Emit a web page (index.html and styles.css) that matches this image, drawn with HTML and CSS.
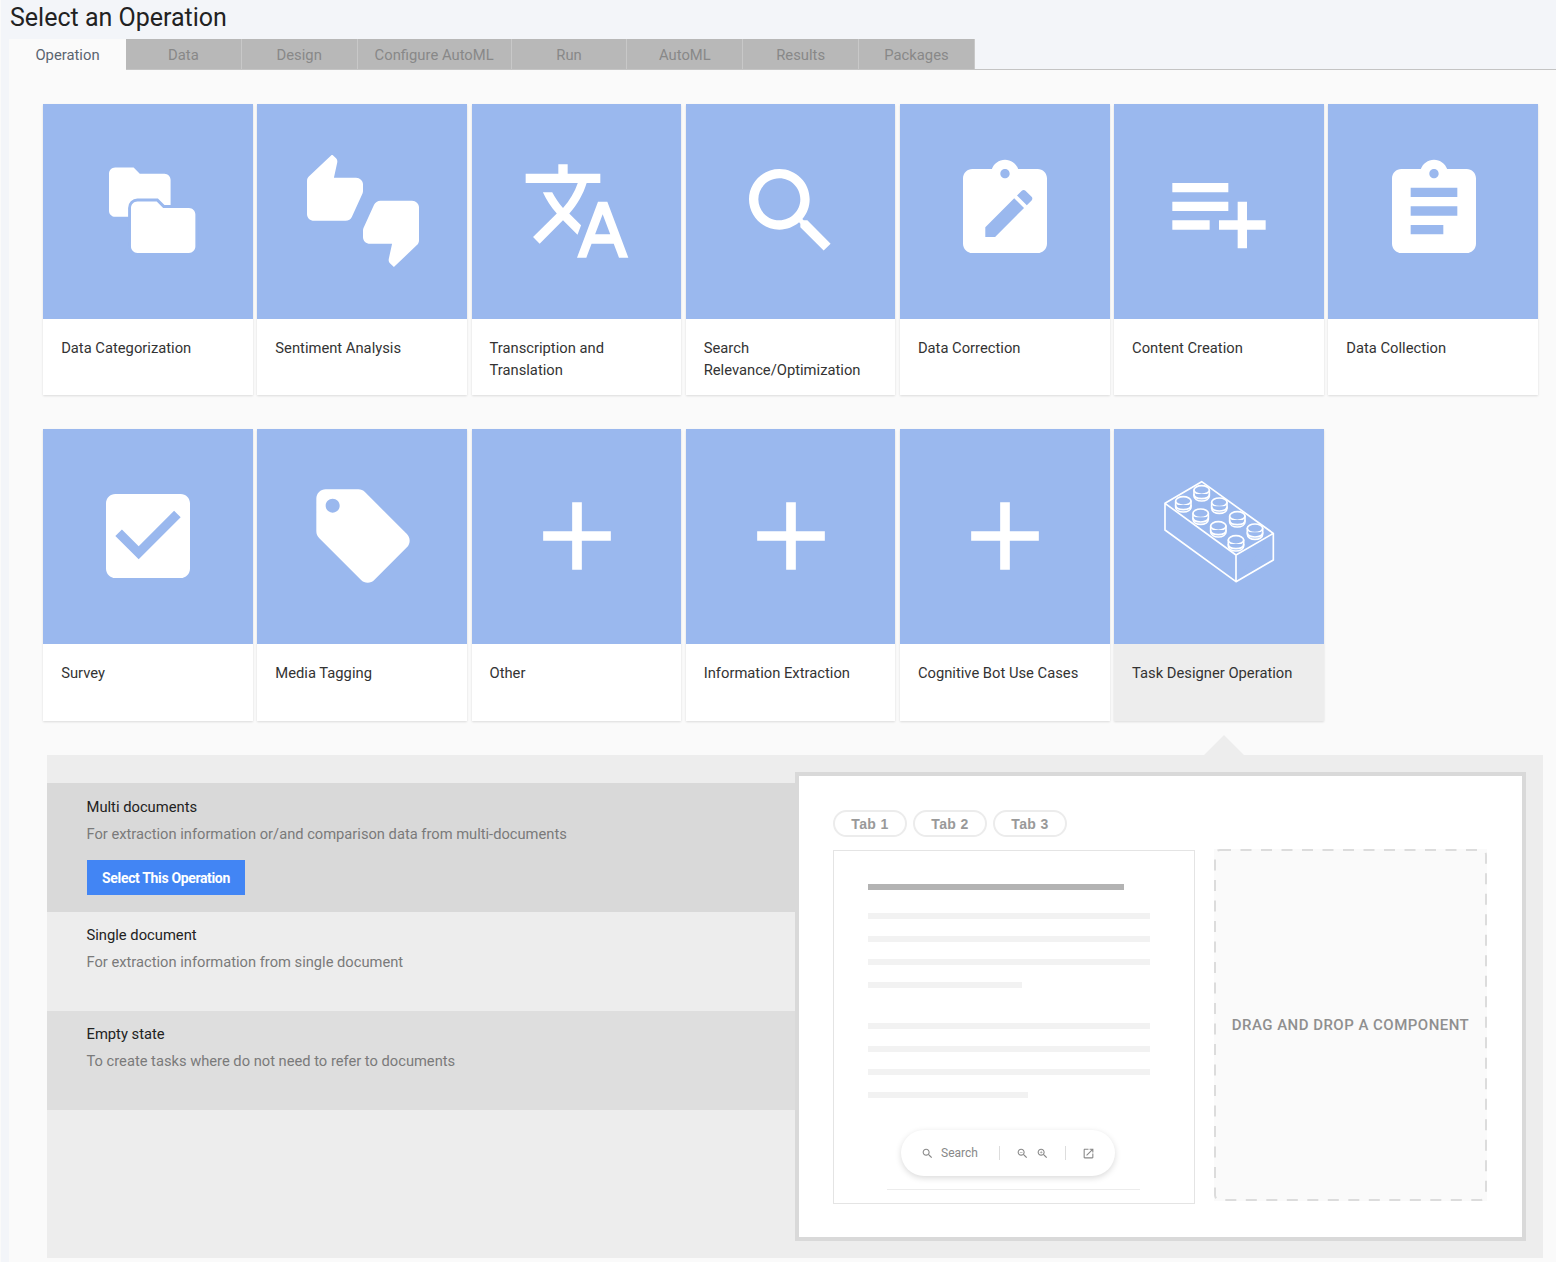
FILE: index.html
```html
<!DOCTYPE html>
<html lang="en">
<head>
    <meta charset="UTF-8">
    <title>Select an Operation</title>
    <link rel="stylesheet" href="styles.css">
</head>
<body>
    <h1 class="page-title">Select an Operation</h1>
    <div class="tabs">
        <div class="tab active">Operation</div>
        <div class="tab">Data</div>
        <div class="tab">Design</div>
        <div class="tab wide">Configure AutoML</div>
        <div class="tab">Run</div>
        <div class="tab">AutoML</div>
        <div class="tab">Results</div>
        <div class="tab">Packages</div>
    </div>
    <div class="content">
        <div class="cards">
            <div class="card">
                <div class="card-img">
                    <svg class="icon" viewBox="0 0 24 24">
                        <g transform="translate(2.32 .04) scale(.66)"><path d="M10 4H4c-1.1 0-1.99.9-1.99 2L2 18c0 1.1.9 2 2 2h16c1.1 0 2-.9 2-2V8c0-1.1-.9-2-2-2h-8l-2-2z"/></g>
                        <g transform="translate(6.97 7.2) scale(.69)"><path class="cut" d="M10 4H4c-1.1 0-1.99.9-1.99 2L2 18c0 1.1.9 2 2 2h16c1.1 0 2-.9 2-2V8c0-1.1-.9-2-2-2h-8l-2-2z"/></g>
                    </svg>
                </div>
                <div class="card-label">Data Categorization</div>
            </div>
            <div class="card">
                <div class="card-img">
                    <svg class="icon" viewBox="0 0 24 24">
                        <g transform="translate(-5.25 -.81) scale(.75 .71)"><path d="M23 10c0-1.1-.9-2-2-2h-6.31l.95-4.57.03-.32c0-.41-.17-.79-.44-1.06L14.17 1 7.59 7.59C7.22 7.95 7 8.45 7 9v10c0 1.1.9 2 2 2h9c.83 0 1.54-.5 1.84-1.22l3.02-7.05c.09-.23.14-.47.14-.73v-2z"/></g>
                        <g transform="translate(29.25 24.7) scale(-.75 -.71)"><path d="M23 10c0-1.1-.9-2-2-2h-6.31l.95-4.57.03-.32c0-.41-.17-.79-.44-1.06L14.17 1 7.59 7.59C7.22 7.95 7 8.45 7 9v10c0 1.1.9 2 2 2h9c.83 0 1.54-.5 1.84-1.22l3.02-7.05c.09-.23.14-.47.14-.73v-2z"/></g>
                    </svg>
                </div>
                <div class="card-label">Sentiment Analysis</div>
            </div>
            <div class="card">
                <div class="card-img">
                    <svg class="icon" viewBox="0 0 24 24"><path d="M12.87 15.07l-2.54-2.51.03-.03c1.74-1.94 2.98-4.17 3.71-6.53H17V4h-7V2H8v2H1v1.99h11.17C11.5 7.92 10.44 9.75 9 11.35 8.07 10.32 7.3 9.19 6.69 8h-2c.73 1.63 1.73 3.17 2.98 4.56l-5.09 5.02L4 19l5-5 3.11 3.11.76-2.04zM18.5 10h-2L12 22h2l1.12-3h4.75L21 22h2l-4.5-12zm-2.62 7l1.62-4.33L19.12 17h-3.24z"/></svg>
                </div>
                <div class="card-label">Transcription and Translation</div>
            </div>
            <div class="card">
                <div class="card-img">
                    <svg class="icon" viewBox="0 0 24 24"><path d="M15.5 14h-.79l-.28-.27C15.41 12.59 16 11.11 16 9.5 16 5.91 13.09 3 9.5 3S3 5.91 3 9.5 5.91 16 9.5 16c1.61 0 3.09-.59 4.23-1.57l.27.28v.79l5 4.99L20.49 19l-4.99-5zm-6 0C7.01 14 5 11.99 5 9.5S7.01 5 9.5 5 14 7.01 14 9.5 11.99 14 9.5 14z"/></svg>
                </div>
                <div class="card-label">Search Relevance/Optimization</div>
            </div>
            <div class="card">
                <div class="card-img">
                    <svg class="icon" viewBox="0 0 24 24">
                        <path fill-rule="evenodd" d="M19 3h-4.18C14.4 1.84 13.3 1 12 1c-1.3 0-2.4.84-2.82 2H5c-1.1 0-2 .9-2 2v14c0 1.1.9 2 2 2h14c1.1 0 2-.9 2-2V5c0-1.1-.9-2-2-2zm-7 0c.55 0 1 .45 1 1s-.45 1-1 1-1-.45-1-1 .45-1 1-1z"/>
                        <g transform="translate(6.1 5.8) scale(.56)"><path class="cut-fill" d="M3 17.25V21h3.75L17.81 9.94l-3.75-3.75L3 17.25zM20.71 7.04c.39-.39.39-1.02 0-1.41l-2.34-2.34c-.39-.39-1.02-.39-1.41 0l-1.83 1.83 3.75 3.75 1.83-1.83z"/></g>
                    </svg>
                </div>
                <div class="card-label">Data Correction</div>
            </div>
            <div class="card">
                <div class="card-img">
                    <svg class="icon" viewBox="0 0 24 24"><path d="M14 10H2v2h12v-2zm0-4H2v2h12V6zm4 8v-4h-2v4h-4v2h4v4h2v-4h4v-2h-4zM2 16h8v-2H2v2z"/></svg>
                </div>
                <div class="card-label">Content Creation</div>
            </div>
            <div class="card">
                <div class="card-img">
                    <svg class="icon" viewBox="0 0 24 24"><path d="M19 3h-4.18C14.4 1.84 13.3 1 12 1c-1.3 0-2.4.84-2.82 2H5c-1.1 0-2 .9-2 2v14c0 1.1.9 2 2 2h14c1.1 0 2-.9 2-2V5c0-1.1-.9-2-2-2zm-7 0c.55 0 1 .45 1 1s-.45 1-1 1-1-.45-1-1 .45-1 1-1zm2 14H7v-2h7v2zm3-4H7v-2h10v2zm0-4H7V7h10v2z"/></svg>
                </div>
                <div class="card-label">Data Collection</div>
            </div>
            <div class="card">
                <div class="card-img">
                    <svg class="icon" viewBox="0 0 24 24"><path d="M19 3H5c-1.11 0-2 .9-2 2v14c0 1.1.89 2 2 2h14c1.11 0 2-.9 2-2V5c0-1.1-.89-2-2-2zm-9 14l-5-5 1.41-1.41L10 14.17l7.59-7.59L19 8l-9 9z"/></svg>
                </div>
                <div class="card-label">Survey</div>
            </div>
            <div class="card">
                <div class="card-img">
                    <svg class="icon" viewBox="0 0 24 24"><path d="M21.41 11.58l-9-9C12.05 2.22 11.55 2 11 2H4c-1.1 0-2 .9-2 2v7c0 .55.22 1.05.59 1.42l9 9c.36.36.86.58 1.41.58.55 0 1.05-.22 1.41-.59l7-7c.37-.36.59-.86.59-1.41 0-.55-.23-1.06-.59-1.42zM5.5 7C4.67 7 4 6.33 4 5.5S4.67 4 5.5 4 7 4.67 7 5.5 6.33 7 5.5 7z"/></svg>
                </div>
                <div class="card-label">Media Tagging</div>
            </div>
            <div class="card">
                <div class="card-img">
                    <svg class="icon icon-add" viewBox="0 0 24 24"><path d="M19 13h-6v6h-2v-6H5v-2h6V5h2v6h6v2z"/></svg>
                </div>
                <div class="card-label">Other</div>
            </div>
            <div class="card">
                <div class="card-img">
                    <svg class="icon icon-add" viewBox="0 0 24 24"><path d="M19 13h-6v6h-2v-6H5v-2h6V5h2v6h6v2z"/></svg>
                </div>
                <div class="card-label">Information Extraction</div>
            </div>
            <div class="card">
                <div class="card-img">
                    <svg class="icon icon-add" viewBox="0 0 24 24"><path d="M19 13h-6v6h-2v-6H5v-2h6V5h2v6h6v2z"/></svg>
                </div>
                <div class="card-label">Cognitive Bot Use Cases</div>
            </div>
            <div class="card selected">
                <div class="card-img">
                    <svg class="icon-brick" viewBox="0 0 540 390">
                        <defs>
                            <g id="stud">
                                <path d="M-23 -10V8c0 9 10 15 23 15s23-6 23-15V-10z"/>
                                <ellipse cx="0" cy="-10" rx="23" ry="13"/>
                                <path d="M-23 2c0 9 10 14 23 14s23-5 23-14"/>
                            </g>
                        </defs>
                        <path d="M105 115L215 50 430 205 318 270zM105 115V195L318 350V270M318 350L430 285V205"/>
                        <use href="#stud" x="215" y="85"/>
                        <use href="#stud" x="160" y="118"/>
                        <use href="#stud" x="268" y="122"/>
                        <use href="#stud" x="212" y="155"/>
                        <use href="#stud" x="322" y="163"/>
                        <use href="#stud" x="265" y="193"/>
                        <use href="#stud" x="375" y="200"/>
                        <use href="#stud" x="318" y="235"/>
                    </svg>
                </div>
                <div class="card-label">Task Designer Operation</div>
            </div>
        </div>

        <div class="detail">
            <div class="detail-arrow"></div>
            <div class="options">
                <div class="option current">
                    <div class="option-title">Multi documents</div>
                    <div class="option-desc">For extraction information or/and comparison data from multi-documents</div>
                    <button class="select-btn">Select This Operation</button>
                </div>
                <div class="option">
                    <div class="option-title">Single document</div>
                    <div class="option-desc">For extraction information from single document</div>
                </div>
                <div class="option shaded">
                    <div class="option-title">Empty state</div>
                    <div class="option-desc">To create tasks where do not need to refer to documents</div>
                </div>
            </div>
            <div class="preview">
                <div class="preview-tabs">
                    <span class="pill">Tab 1</span>
                    <span class="pill">Tab 2</span>
                    <span class="pill">Tab 3</span>
                </div>
                <div class="preview-body">
                    <div class="doc">
                        <div class="doc-heading"></div>
                        <div class="doc-lines">
                            <div class="doc-line"></div>
                            <div class="doc-line"></div>
                            <div class="doc-line"></div>
                            <div class="doc-line short"></div>
                        </div>
                        <div class="doc-lines">
                            <div class="doc-line"></div>
                            <div class="doc-line"></div>
                            <div class="doc-line"></div>
                            <div class="doc-line shorter"></div>
                        </div>
                        <div class="toolbar">
                            <svg class="tool" viewBox="0 0 24 24"><path d="M15.5 14h-.79l-.28-.27C15.41 12.59 16 11.11 16 9.5 16 5.91 13.09 3 9.5 3S3 5.91 3 9.5 5.91 16 9.5 16c1.61 0 3.09-.59 4.23-1.57l.27.28v.79l5 4.99L20.49 19l-4.99-5zm-6 0C7.01 14 5 11.99 5 9.5S7.01 5 9.5 5 14 7.01 14 9.5 11.99 14 9.5 14z"/></svg>
                            <span class="toolbar-text">Search</span>
                            <span class="toolbar-sep"></span>
                            <svg class="tool" viewBox="0 0 24 24"><path d="M15.5 14h-.79l-.28-.27C15.41 12.59 16 11.11 16 9.5 16 5.91 13.09 3 9.5 3S3 5.91 3 9.5 5.91 16 9.5 16c1.61 0 3.09-.59 4.23-1.57l.27.28v.79l5 4.99L20.49 19l-4.99-5zm-6 0C7.01 14 5 11.99 5 9.5S7.01 5 9.5 5 14 7.01 14 9.5 11.99 14 9.5 14zM7 9h5v1H7z"/></svg>
                            <svg class="tool tool-gap" viewBox="0 0 24 24"><path d="M15.5 14h-.79l-.28-.27C15.41 12.59 16 11.11 16 9.5 16 5.91 13.09 3 9.5 3S3 5.91 3 9.5 5.91 16 9.5 16c1.61 0 3.09-.59 4.23-1.57l.27.28v.79l5 4.99L20.49 19l-4.99-5zm-6 0C7.01 14 5 11.99 5 9.5S7.01 5 9.5 5 14 7.01 14 9.5 11.99 14 9.5 14zM12 10h-2v2H9v-2H7V9h2V7h1v2h2v1z"/></svg>
                            <span class="toolbar-sep"></span>
                            <svg class="tool" viewBox="0 0 24 24"><path d="M19 19H5V5h7V3H5c-1.11 0-2 .9-2 2v14c0 1.1.89 2 2 2h14c1.1 0 2-.9 2-2v-7h-2v7zM14 3v2h3.59l-9.83 9.83 1.41 1.41L19 6.41V10h2V3h-7z"/></svg>
                        </div>
                        <div class="doc-rule"></div>
                    </div>
                    <div class="dropzone">
                        <svg class="dropzone-edge" viewBox="0 0 273 352"><rect x="1" y="1" width="271" height="350" rx="5"/></svg>
                        DRAG AND DROP A COMPONENT
                    </div>
                </div>
            </div>
        </div>
    </div>
</body>
</html>
```

FILE: styles.css
```css
* {
    box-sizing: border-box;
}
html, body {
    height: 100%;
}
body {
    margin: 0;
    padding-left: 1px;
    background-color: #f3f5f9;
    font-family: 'Roboto', 'Liberation Sans', sans-serif;
    color: #333;
    overflow: hidden;
    border-left: 1px solid #fafafa;
}
.page-title {
    margin: 0;
    padding-left: 8px;
    height: 39px;
    font-size: 25px;
    line-height: 36px;
    font-weight: 400;
    color: #222;
}

/* top tabs */
.tabs {
    display: flex;
    height: 31px;
    margin-left: 8px;
    border-bottom: 1px solid #c4c4c4;
}
.tab {
    min-width: 115.8px;
    padding: 0 16px;
    background-color: #b8b8b8;
    border-right: 1px solid #c8c8c8;
    color: #888;
    font-size: 14.8px;
    line-height: 33px;
    text-align: center;
}
.tab.wide {
    padding: 0 17px;
}
.tab.active {
    width: 117px;
    margin-left: -1px;
    height: 31px;
    background-color: #fafafa;
    border-right: none;
    color: #5b6470;
}

.content {
    margin-left: 7px;
    padding: 34px 18px 4px 34px;
    background-color: #fafafa;
    height: 1192px;
}

/* operation cards */
.cards {
    display: grid;
    grid-template-columns: repeat(7, 209.7px);
    grid-template-rows: 291px 292px;
    gap: 34px 4.5px;
    margin-left: 0.15px;
}
.card {
    background-color: #fff;
    box-shadow: 0 1px 2px rgba(0, 0, 0, 0.12);
}
.card.selected {
    background-color: #ededed;
}
.card-img {
    height: 215px;
    background-color: #9ab8ee;
    display: flex;
    align-items: center;
    justify-content: center;
}
.icon {
    width: 112px;
    height: 112px;
    margin: 0 0 1px 1px;
    fill: #fff;
}
.icon-add {
    width: 116px;
    height: 116px;
}
.icon .cut {
    stroke: #9ab8ee;
    stroke-width: 1.8;
    paint-order: stroke;
}
.icon .cut-fill {
    fill: #9ab8ee;
}
.icon-brick {
    width: 180px;
    height: 130px;
    margin: 0 0 13px 2px;
    fill: #9ab8ee;
    stroke: #fff;
    stroke-width: 5;
    stroke-linejoin: round;
}
.card-label {
    padding: 18px 18px 10px;
    font-size: 14.75px;
    line-height: 22px;
    color: #333;
}

/* detail panel under the cards */
.detail {
    position: relative;
    display: flex;
    align-items: flex-start;
    height: 503px;
    margin: 34px -5px 0 4px;
    background-color: #ededed;
}
.detail-arrow {
    position: absolute;
    top: -20px;
    left: 1157px;
    width: 0;
    height: 0;
    border-left: 20px solid transparent;
    border-right: 20px solid transparent;
    border-bottom: 20px solid #ededed;
}
.options {
    width: 748px;
    padding-top: 28px;
}
.option {
    height: 99px;
    padding: 12px 39.5px 0;
    background-color: #ededed;
}
.option.current {
    height: 129px;
    background-color: #d9d9d9;
    padding-top: 13px;
}
.option.shaded {
    background-color: #dedede;
}
.option-title {
    font-size: 14.75px;
    line-height: 22px;
    color: #222;
}
.option-desc {
    margin-top: 5px;
    font-size: 14.7px;
    line-height: 22px;
    color: #7a7a7a;
}
.select-btn {
    display: block;
    width: 158px;
    height: 35px;
    margin: 15px 0 0 0.5px;
    border: none;
    background-color: #4285f4;
    color: #fff;
    font-family: inherit;
    font-size: 14px;
    font-weight: 700;
    letter-spacing: -0.35px;
    cursor: pointer;
}

/* right preview */
.preview {
    width: 731px;
    height: 469px;
    margin-top: 17px;
    padding: 34px 35px 0 34px;
    background-color: #fff;
    border: 4px solid #d9d9d9;
}
.preview-tabs {
    display: flex;
    gap: 6px;
}
.pill {
    width: 74px;
    height: 27px;
    border: 2px solid #ececec;
    border-radius: 14px;
    color: #999;
    font-family: 'Liberation Sans', sans-serif;
    font-size: 14px;
    font-weight: 700;
    letter-spacing: 0.4px;
    line-height: 24px;
    text-align: center;
}
.preview-body {
    display: flex;
    align-items: flex-start;
    gap: 19px;
    margin-top: 12px;
}
.doc {
    position: relative;
    flex: 0 0 362px;
    height: 354px;
    margin-top: 1px;
    padding: 33px 44px 0 34px;
    border: 1px solid #e4e4e4;
}
.doc-heading {
    width: 256px;
    height: 6px;
    background-color: #b3b3b3;
}
.doc-lines {
    display: flex;
    flex-direction: column;
    gap: 17px;
    margin-top: 23px;
}
.doc-lines + .doc-lines {
    margin-top: 35px;
}
.doc-line {
    height: 6px;
    width: 282px;
    background-color: #f2f2f2;
}
.doc-line.short {
    width: 154px;
}
.doc-line.shorter {
    width: 160px;
}
.toolbar {
    position: absolute;
    top: 279px;
    left: 67px;
    width: 214px;
    height: 46px;
    display: flex;
    align-items: center;
    padding-left: 20px;
    background-color: #fff;
    border-radius: 23px;
    box-shadow: 0 2px 6px rgba(0, 0, 0, 0.15);
}
.tool {
    width: 13px;
    height: 13px;
    flex: none;
    fill: #888;
}
.tool-gap {
    margin-left: 7px;
}
.toolbar-text {
    margin-left: 7px;
    font-size: 12px;
    color: #888;
}
.toolbar-sep {
    width: 1px;
    height: 14px;
    margin: 0 16px 0 21px;
    background-color: #ddd;
}
.toolbar-sep + .tool + .tool + .toolbar-sep {
    margin-left: 16px;
}
.doc-rule {
    position: absolute;
    top: 338px;
    left: 53px;
    width: 253px;
    height: 1px;
    background-color: #ececec;
}
.dropzone {
    position: relative;
    flex: 0 0 273px;
    height: 352px;
    display: flex;
    align-items: center;
    justify-content: center;
    background-color: #fafafa;
    color: #8f8f8f;
    font-size: 15px;
    font-weight: 500;
    letter-spacing: 0.48px;
    white-space: nowrap;
}
.dropzone-edge {
    position: absolute;
    top: 0;
    left: 0;
    width: 273px;
    height: 352px;
    fill: none;
    stroke: #dcdcdc;
    stroke-width: 2;
    stroke-dasharray: 11 9.5;
}
```
